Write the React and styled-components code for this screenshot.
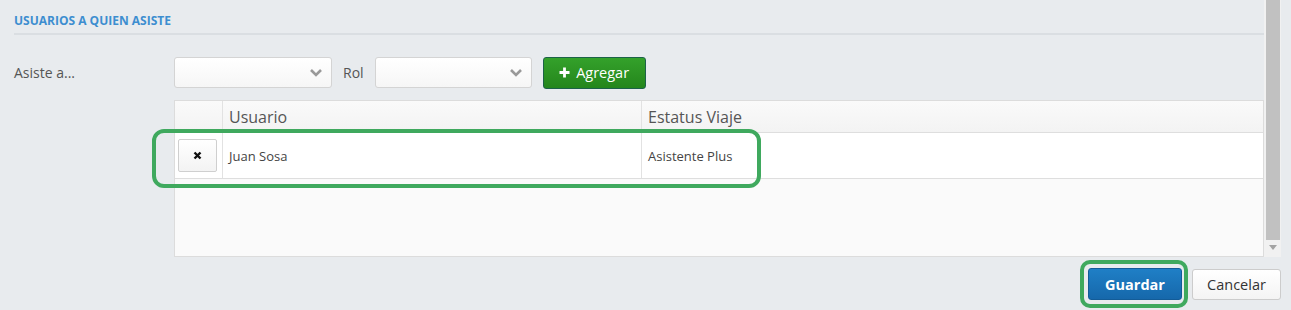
import React from 'react';
import styled, { createGlobalStyle } from 'styled-components';

const GlobalStyle = createGlobalStyle`
  html, body {
    margin: 0;
    padding: 0;
    background: #e8ebee;
  }
  body {
    font-family: 'Open Sans', 'Noto Sans', sans-serif;
    color: #444;
  }
  * {
    box-sizing: border-box;
  }
`;

const Page = styled.div`
  width: 1291px;
  height: 310px;
  overflow: hidden;
  background: #e8ebee;
`;

const ScrollArea = styled.div`
  display: flex;
  height: 257px;
  margin-right: 10px;
`;

const Content = styled.div`
  flex: 1;
  padding-left: 14px;
`;

const Scrollbar = styled.div`
  width: 17px;
  display: flex;
  flex-direction: column;
  background: #f1f1f1;
`;

const Thumb = styled.div`
  height: 240px;
  margin: 0 1px 0 2px;
  background: #c1c1c1;
`;

const ArrowDown = styled.div`
  flex: 1;
  display: flex;
  align-items: center;
  justify-content: center;
  padding-bottom: 3px;
`;

const SectionTitle = styled.h4`
  margin: 0;
  padding: 14px 0 5px;
  font-size: 12px;
  line-height: 14px;
  font-weight: 700;
  color: #3d8ed0;
  text-transform: uppercase;
  border-bottom: 2px solid #dadee2;
`;

const FormRow = styled.div`
  display: flex;
  align-items: center;
  height: 33px;
  margin-top: 21px;
`;

const Label = styled.label`
  width: 160px;
  font-size: 14px;
  color: #555;
`;

const InlineLabel = styled.span`
  margin: 0 11px;
  font-size: 14px;
  color: #555;
`;

const Select = styled.div`
  width: ${(p) => p.width}px;
  height: 31px;
  display: flex;
  align-items: center;
  justify-content: flex-end;
  padding-right: 8px;
  background: linear-gradient(#ffffff, #f6f6f6);
  border: 1px solid #d4d4d4;
  border-radius: 3px;
`;

const AddButton = styled.button`
  margin-left: 11px;
  width: 103px;
  height: 32px;
  display: flex;
  align-items: center;
  justify-content: center;
  gap: 6px;
  padding: 0;
  font-family: inherit;
  font-size: 14.5px;
  color: #fff;
  background: linear-gradient(#34a12b, #24861c);
  border: 1px solid #1c6248;
  border-radius: 3px;
`;

const TableWrap = styled.div`
  position: relative;
  margin: 11px 0 0 160px;
  height: 157px;
  display: flex;
  flex-direction: column;
  background: #fafafa;
  border: 1px solid #dcdcdc;
`;

const GridRow = styled.div`
  display: grid;
  grid-template-columns: 48px 419px 1fr;
  height: ${(p) => p.height}px;
  background: ${(p) => (p.header ? 'linear-gradient(#fafafa, #f3f3f3)' : '#fff')};
  border-bottom: 1px solid #dedede;
`;

const Cell = styled.div`
  display: flex;
  align-items: center;
  padding: 0 ${(p) => (p.tight ? 3 : 6)}px;
  font-size: ${(p) => (p.header ? 16 : 13)}px;
  color: ${(p) => (p.header ? '#555' : '#444')};
  border-right: 1px solid #e2e2e2;
  &:last-child {
    border-right: none;
  }
`;

const RemoveButton = styled.button`
  width: 39px;
  height: 33px;
  display: flex;
  align-items: center;
  justify-content: center;
  padding: 0;
  background: linear-gradient(#ffffff, #f3f3f3);
  border: 1px solid #cfcfcf;
  border-radius: 2px;
`;

const Highlight = styled.div`
  position: absolute;
  border: 4px solid #3fa95e;
  border-radius: ${(p) => p.radius}px;
  pointer-events: none;
`;

const RowHighlight = styled(Highlight)`
  left: -23px;
  top: 28px;
  width: 609px;
  height: 59px;
`;

const Footer = styled.div`
  display: flex;
  justify-content: flex-end;
  align-items: center;
  padding: 11px 10px 0 0;
`;

const SaveWrap = styled.span`
  position: relative;
  display: inline-flex;
`;

const SaveRing = styled(Highlight)`
  left: -8px;
  right: -6px;
  top: -8px;
  bottom: -8px;
`;

const SaveButton = styled.button`
  width: 94px;
  height: 32px;
  padding: 0;
  font-family: inherit;
  font-size: 14.5px;
  font-weight: 700;
  color: #fff;
  background: linear-gradient(#1f7fc6, #1668ab);
  border: 1px solid #135c98;
  border-radius: 3px;
`;

const CancelButton = styled.button`
  margin-left: 10px;
  width: 89px;
  height: 31px;
  padding: 0;
  font-family: inherit;
  font-size: 14.5px;
  color: #333;
  background: linear-gradient(#ffffff, #f4f4f4);
  border: 1px solid #cccccc;
  border-radius: 3px;
`;

const Chevron = () => (
  <svg width="14" height="9" viewBox="0 0 14 9">
    <polyline points="2,2 7,7 12,2" fill="none" stroke="#999" strokeWidth="2.6" />
  </svg>
);

const Plus = () => (
  <svg width="11" height="11" viewBox="0 0 11 11">
    <path d="M5.5 0.5v10M0.5 5.5h10" stroke="#fff" strokeWidth="2.8" />
  </svg>
);

const Cross = () => (
  <svg width="9" height="9" viewBox="0 0 9 9">
    <path d="M1.5 1.5l6 6M7.5 1.5l-6 6" stroke="#111" strokeWidth="2.4" />
  </svg>
);

const rows = [{ usuario: 'Juan Sosa', estatus: 'Asistente Plus' }];

const App = () => (
  <Page>
    <GlobalStyle />
    <ScrollArea>
      <Content>
        <SectionTitle>Usuarios a quien asiste</SectionTitle>
        <FormRow>
          <Label>Asiste a...</Label>
          <Select width={158}>
            <Chevron />
          </Select>
          <InlineLabel>Rol</InlineLabel>
          <Select width={157}>
            <Chevron />
          </Select>
          <AddButton>
            <Plus />
            Agregar
          </AddButton>
        </FormRow>
        <TableWrap>
          <GridRow header height={32}>
            <Cell header />
            <Cell header>Usuario</Cell>
            <Cell header>Estatus Viaje</Cell>
          </GridRow>
          {rows.map((r) => (
            <GridRow key={r.usuario} height={46}>
              <Cell tight>
                <RemoveButton>
                  <Cross />
                </RemoveButton>
              </Cell>
              <Cell>{r.usuario}</Cell>
              <Cell>{r.estatus}</Cell>
            </GridRow>
          ))}
          <RowHighlight radius={12} />
        </TableWrap>
      </Content>
      <Scrollbar>
        <Thumb />
        <ArrowDown>
          <svg width="8" height="5" viewBox="0 0 8 5">
            <polygon points="0,0 8,0 4,5" fill="#a3a3a3" />
          </svg>
        </ArrowDown>
      </Scrollbar>
    </ScrollArea>
    <Footer>
      <SaveWrap>
        <SaveButton>Guardar</SaveButton>
        <SaveRing radius={10} />
      </SaveWrap>
      <CancelButton>Cancelar</CancelButton>
    </Footer>
  </Page>
);

export default App;
